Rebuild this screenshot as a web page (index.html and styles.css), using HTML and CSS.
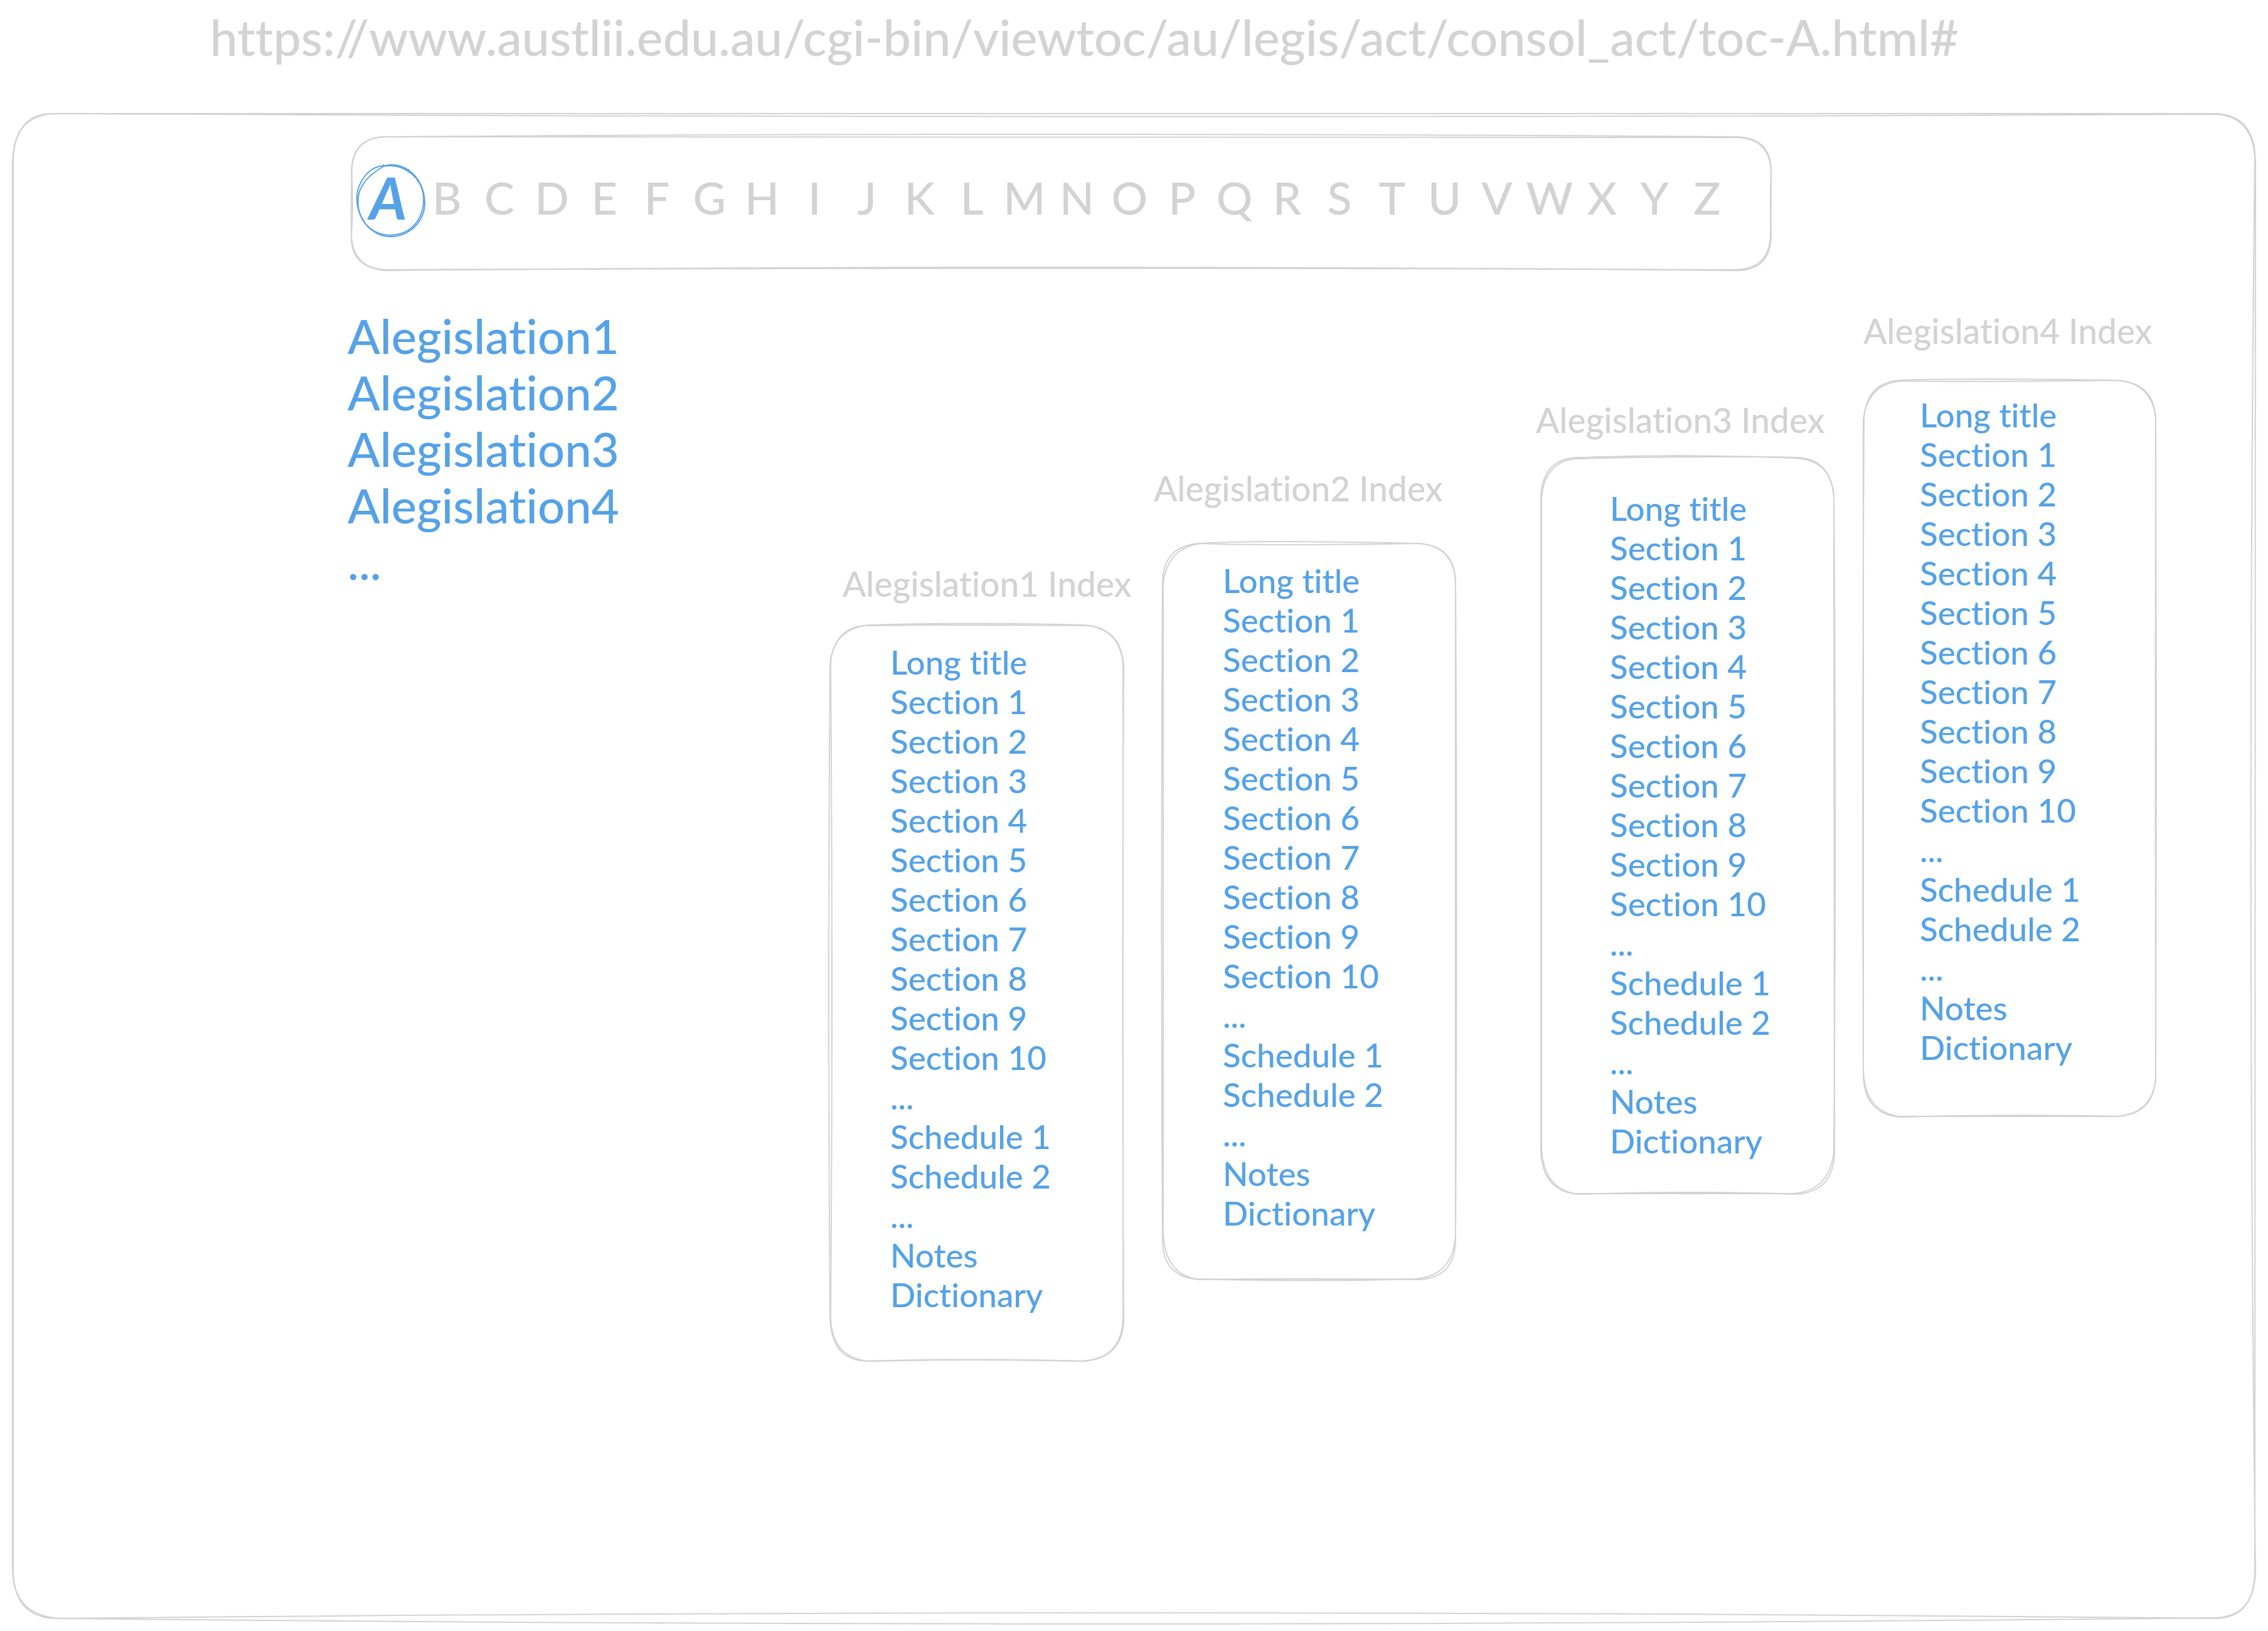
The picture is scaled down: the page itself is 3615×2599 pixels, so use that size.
FILE: index.html
```html
<!DOCTYPE html>
<html lang="en">
<head>
<meta charset="utf-8">
<meta name="viewport" content="width=device-width, initial-scale=1">
<title>Legislation index wireframe</title>
<link rel="stylesheet" href="styles.css">
</head>
<body>
<header class="address">https://www.austlii.edu.au/cgi-bin/viewtoc/au/legis/act/consol_act/toc-A.html#</header>

<main class="window">
  <svg class="outline" viewBox="0 0 3575 2398" preserveAspectRatio="none" aria-hidden="true">
    <path d="M68 0Q1790 -6 3508 0Q3574 0 3575 76Q3571 1200 3574 2320Q3574 2398 3510 2398Q1800 2380 76 2398Q0 2394 0 2318Q2 1200 0 76Q2 2 68 0Z"/>
    <path d="M64 0Q1790 9 3512 1Q3570 4 3574 70Q3561 1200 3575 2324Q3573 2397 3508 2397Q1780 2416 72 2398Q2 2398 1 2322Q-2 1200 1 70Q6 0 64 0Z"/>
  </svg>

  <nav class="alphabet" aria-label="Alphabet">
    <svg class="outline" viewBox="0 0 2260 213" preserveAspectRatio="none" aria-hidden="true">
      <path d="M52 0Q1130 -8 2205 0Q2260 2 2260 54Q2258 106 2260 160Q2258 213 2205 213Q1130 203 54 213Q0 208 0 160Q4 106 0 54Q2 2 52 0Z"/>
      <path d="M56 0Q1130 -1 2208 1Q2259 4 2260 58Q2260 106 2259 158Q2257 211 2202 212Q1130 207 58 212Q2 211 0 156Q-1 106 1 50Q4 0 56 0Z"/>
    </svg>
    <a class="letter current" href="#a" aria-current="page">A
      <svg class="ring" viewBox="0 0 111 115" aria-hidden="true">
        <path d="M44 3C61 -4 82 4 95 19C111 38 115 68 103 88C92 106 73 116 53 115C32 114 15 99 7 80C-2 57 0 37 15 18C23 8 34 2 48 2"/>
        <path d="M45 0L43 4C24 15 9 30 5 47C0 69 8 94 29 106C47 116 72 115 89 101C106 86 113 60 105 37C96 14 70 -2 45 3M80 8L86 9"/>
      </svg>
    </a>
    <a class="letter" href="#b">B</a>
    <a class="letter" href="#c">C</a>
    <a class="letter" href="#d">D</a>
    <a class="letter" href="#e">E</a>
    <a class="letter" href="#f">F</a>
    <a class="letter" href="#g">G</a>
    <a class="letter" href="#h">H</a>
    <a class="letter" href="#i">I</a>
    <a class="letter" href="#j">J</a>
    <a class="letter" href="#k">K</a>
    <a class="letter" href="#l">L</a>
    <a class="letter" href="#m">M</a>
    <a class="letter" href="#n">N</a>
    <a class="letter" href="#o">O</a>
    <a class="letter" href="#p">P</a>
    <a class="letter" href="#q">Q</a>
    <a class="letter" href="#r">R</a>
    <a class="letter" href="#s">S</a>
    <a class="letter" href="#t">T</a>
    <a class="letter" href="#u">U</a>
    <a class="letter" href="#v">V</a>
    <a class="letter" href="#w">W</a>
    <a class="letter" href="#x">X</a>
    <a class="letter" href="#y">Y</a>
    <a class="letter" href="#z">Z</a>
  </nav>

  <div class="board">
    <ul class="acts">
      <li><a href="#index1">Alegislation1</a></li>
      <li><a href="#index2">Alegislation2</a></li>
      <li><a href="#index3">Alegislation3</a></li>
      <li><a href="#index4">Alegislation4</a></li>
      <li>...</li>
    </ul>

    <section class="index first" id="index1">
      <h2 class="index-title">Alegislation1 Index</h2>
      <div class="card">
        <svg class="outline" viewBox="0 0 468 1173" preserveAspectRatio="none" aria-hidden="true">
          <path d="M62 0Q240 -5 405 0Q466 4 468 68Q465 586 468 1112Q464 1168 405 1173Q240 1168 56 1173Q2 1170 0 1104Q-4 586 0 64Q4 6 62 0Z"/>
          <path d="M52 1Q240 -1 412 1Q462 8 467 62Q466 586 467 1104Q466 1170 400 1173Q240 1169 60 1173Q1 1166 1 1100Q5 586 1 60Q6 8 52 1Z"/>
        </svg>
        <ul class="entries">
          <li><a href="#">Long title</a></li>
          <li><a href="#">Section 1</a></li>
          <li><a href="#">Section 2</a></li>
          <li><a href="#">Section 3</a></li>
          <li><a href="#">Section 4</a></li>
          <li><a href="#">Section 5</a></li>
          <li><a href="#">Section 6</a></li>
          <li><a href="#">Section 7</a></li>
          <li><a href="#">Section 8</a></li>
          <li><a href="#">Section 9</a></li>
          <li><a href="#">Section 10</a></li>
          <li>...</li>
          <li><a href="#">Schedule 1</a></li>
          <li><a href="#">Schedule 2</a></li>
          <li>...</li>
          <li><a href="#">Notes</a></li>
          <li><a href="#">Dictionary</a></li>
        </ul>
      </div>
    </section>

    <section class="index second" id="index2">
      <h2 class="index-title">Alegislation2 Index</h2>
      <div class="card">
        <svg class="outline" viewBox="0 0 468 1173" preserveAspectRatio="none" aria-hidden="true">
          <path d="M58 0Q160 -6 405 0Q464 2 467 58Q470 586 467 1110Q466 1171 408 1173Q240 1171 58 1173Q0 1169 0 1110Q-3 586 0 60Q2 4 58 0Z"/>
          <path d="M62 0Q160 4 408 0Q465 4 467 62Q465 586 467 1104Q462 1168 402 1172Q240 1177 54 1172Q4 1164 1 1100Q2 586 1 64Q8 6 62 0Z"/>
        </svg>
        <ul class="entries">
          <li><a href="#">Long title</a></li>
          <li><a href="#">Section 1</a></li>
          <li><a href="#">Section 2</a></li>
          <li><a href="#">Section 3</a></li>
          <li><a href="#">Section 4</a></li>
          <li><a href="#">Section 5</a></li>
          <li><a href="#">Section 6</a></li>
          <li><a href="#">Section 7</a></li>
          <li><a href="#">Section 8</a></li>
          <li><a href="#">Section 9</a></li>
          <li><a href="#">Section 10</a></li>
          <li>...</li>
          <li><a href="#">Schedule 1</a></li>
          <li><a href="#">Schedule 2</a></li>
          <li>...</li>
          <li><a href="#">Notes</a></li>
          <li><a href="#">Dictionary</a></li>
        </ul>
      </div>
    </section>

    <section class="index third" id="index3">
      <h2 class="index-title">Alegislation3 Index</h2>
      <div class="card">
        <svg class="outline" viewBox="0 0 468 1173" preserveAspectRatio="none" aria-hidden="true">
          <path d="M58 0Q240 -6 405 1Q464 4 467 64Q466 586 468 1112Q464 1170 408 1174Q240 1168 60 1174Q2 1170 0 1104Q-2 586 0 60Q4 2 58 0Z"/>
          <path d="M54 2Q240 -3 410 0Q460 2 467 60Q471 586 467 1104Q462 1168 402 1173Q240 1173 54 1173Q4 1164 1 1100Q1 586 1 64Q6 8 54 2Z"/>
        </svg>
        <ul class="entries">
          <li><a href="#">Long title</a></li>
          <li><a href="#">Section 1</a></li>
          <li><a href="#">Section 2</a></li>
          <li><a href="#">Section 3</a></li>
          <li><a href="#">Section 4</a></li>
          <li><a href="#">Section 5</a></li>
          <li><a href="#">Section 6</a></li>
          <li><a href="#">Section 7</a></li>
          <li><a href="#">Section 8</a></li>
          <li><a href="#">Section 9</a></li>
          <li><a href="#">Section 10</a></li>
          <li>...</li>
          <li><a href="#">Schedule 1</a></li>
          <li><a href="#">Schedule 2</a></li>
          <li>...</li>
          <li><a href="#">Notes</a></li>
          <li><a href="#">Dictionary</a></li>
        </ul>
      </div>
    </section>

    <section class="index fourth" id="index4">
      <h2 class="index-title">Alegislation4 Index</h2>
      <div class="card">
        <svg class="outline" viewBox="0 0 468 1173" preserveAspectRatio="none" aria-hidden="true">
          <path d="M60 0Q160 -4 405 0Q466 4 467 64Q469 586 467 1108Q466 1168 408 1173Q240 1169 60 1174Q2 1170 0 1108Q-2 586 1 60Q6 2 60 0Z"/>
          <path d="M64 1Q160 3 402 0Q460 2 467 60Q466 586 467 1112Q462 1170 402 1173Q240 1173 56 1173Q2 1164 0 1100Q2 586 0 64Q6 4 64 1Z"/>
        </svg>
        <ul class="entries">
          <li><a href="#">Long title</a></li>
          <li><a href="#">Section 1</a></li>
          <li><a href="#">Section 2</a></li>
          <li><a href="#">Section 3</a></li>
          <li><a href="#">Section 4</a></li>
          <li><a href="#">Section 5</a></li>
          <li><a href="#">Section 6</a></li>
          <li><a href="#">Section 7</a></li>
          <li><a href="#">Section 8</a></li>
          <li><a href="#">Section 9</a></li>
          <li><a href="#">Section 10</a></li>
          <li>...</li>
          <li><a href="#">Schedule 1</a></li>
          <li><a href="#">Schedule 2</a></li>
          <li>...</li>
          <li><a href="#">Notes</a></li>
          <li><a href="#">Dictionary</a></li>
        </ul>
      </div>
    </section>
  </div>
</main>
</body>
</html>
```
FILE: styles.css
```css
:root {
  --blue: #56a2e8;
  --gray: #d3d3d3;
}

* {
  box-sizing: border-box;
}

body {
  margin: 0;
  padding: 14px 20px 20px;
  min-height: 100vh;
  display: flex;
  flex-direction: column;
  gap: 77px;
  background: #fff;
  color: var(--gray);
  font-family: Lato, "Open Sans", sans-serif;
  font-weight: 500;
  font-variant-ligatures: none;
}

a {
  color: inherit;
  text-decoration: none;
}

ul {
  margin: 0;
  padding: 0;
  list-style: none;
}

.address {
  padding-left: 8.8%;
  font-size: 79px;
  line-height: 90px;
}

/* Hand-drawn double outline that stretches with its box */
.outline {
  position: absolute;
  inset: 0;
  width: 100%;
  height: 100%;
  overflow: visible;
  pointer-events: none;
}

.outline path,
.ring path {
  fill: none;
  stroke: var(--gray);
  stroke-width: 2px;
  vector-effect: non-scaling-stroke;
}

.window {
  position: relative;
  flex: 1;
  padding-top: 37px;
}

.alphabet {
  position: relative;
  display: grid;
  grid-template-columns: 104fr repeat(25, 84fr);
  align-items: center;
  width: 63.3%;
  margin-left: 15.1%;
  padding: 39px 60px 59px 7px;
}

.letter {
  font-size: 72px;
  line-height: 115px;
  text-align: center;
}

.current {
  position: relative;
  color: var(--blue);
  font-size: 92px;
  font-style: italic;
  font-weight: 700;
}

.ring {
  position: absolute;
  top: 5px;
  left: 0;
  width: 111px;
  height: 115px;
  overflow: visible;
}

.ring path {
  stroke: var(--blue);
}

.board {
  display: grid;
  grid-template-columns: 534fr 769fr 468fr 62fr 468fr 135fr 468fr 46fr 467fr 158fr;
  align-items: start;
}

.acts {
  grid-column: 2;
  min-width: 0;
  padding-top: 59px;
  color: var(--blue);
  font-size: 76px;
  line-height: 90px;
}

.index {
  min-width: 0;
}

.index-title {
  margin: 0;
  font-size: 55px;
  font-weight: 500;
  line-height: 63px;
  white-space: nowrap;
}

.card {
  position: relative;
  padding: 27px 0 75px 96px;
}

.entries {
  color: var(--blue);
  font-size: 53px;
  line-height: 63px;
}

.first {
  grid-column: 3;
  padding-top: 468px;
}

.first .index-title {
  margin: 0 0 34px 20px;
}

.second {
  grid-column: 5;
  padding-top: 316px;
}

.second .index-title {
  margin: 0 0 56px -14px;
}

.third {
  grid-column: 7;
  padding-top: 207px;
}

.third .index-title {
  margin: 0 0 28px -8px;
}

.third .card {
  padding: 49px 0 53px 110px;
}

.fourth {
  grid-column: 9;
  padding-top: 65px;
}

.fourth .index-title {
  margin-bottom: 47px;
}

.fourth .card {
  padding: 23px 0 79px 90px;
}
```
